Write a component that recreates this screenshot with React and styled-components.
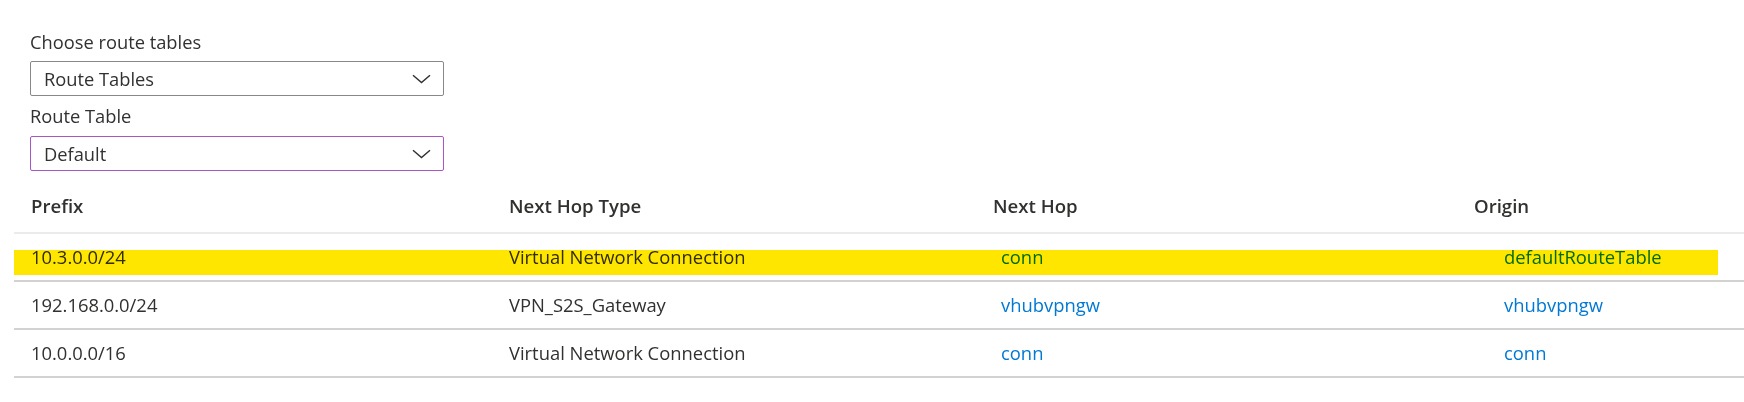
import styled, { createGlobalStyle } from 'styled-components';

const GlobalStyle = createGlobalStyle`
  body {
    margin: 0;
    background: #fff;
    font-family: "Open Sans", "Noto Sans", sans-serif;
    color: #323130;
  }
`;

const Page = styled.div`
  width: 1744px;
  height: 402px;
  overflow: hidden;
  padding-top: 26px;
  box-sizing: border-box;
`;

const Filters = styled.div`
  display: flex;
  flex-direction: column;
  padding-left: 30px;
  width: 414px;
`;

const Label = styled.label`
  display: block;
  box-sizing: border-box;
  font-size: 18.3px;
  line-height: 24px;
  padding-top: 4px;
  height: ${p => p.$h || 35}px;
`;

const Select = styled.div`
  display: flex;
  align-items: center;
  justify-content: space-between;
  height: 35px;
  box-sizing: border-box;
  border: 1.5px solid ${p => (p.$focused ? '#a855c6' : '#8a8886')};
  border-radius: 2px;
  padding: 0 12px 0 13px;
  font-size: 18.3px;
  margin-bottom: 4px;
`;

const Chevron = () => (
  <svg width="19" height="10" viewBox="0 0 19 10" fill="none">
    <path d="M1 1.2 L9.5 8.6 L18 1.2" stroke="#323130" strokeWidth="1.4" />
  </svg>
);

const Table = styled.div`
  margin-left: 14px;
  margin-top: 11px;
`;

const Row = styled.div`
  position: relative;
  display: grid;
  grid-template-columns: 478px 484px 481px 1fr;
  height: 48px;
  box-sizing: border-box;
  border-bottom: 2px solid ${p => (p.$head ? '#edebe9' : '#d4d2d0')};

  ${p =>
    p.$highlight &&
    `
    &::after {
      content: "";
      position: absolute;
      left: 0;
      right: 26px;
      top: 16px;
      height: 25px;
      background: #ffe600;
      mix-blend-mode: multiply;
    }
  `}
`;

const Cell = styled.div`
  padding-left: ${p => p.$indent || 17}px;
  padding-top: ${p => (p.$head ? 8 : 11)}px;
  font-size: ${p => (p.$head ? 18.6 : 18.4)}px;
  line-height: 24px;
  font-weight: ${p => (p.$head ? 600 : 400)};
  color: ${p => (p.$link ? '#0078d4' : '#323130')};
  white-space: nowrap;
`;

const routes = [
  { prefix: '10.3.0.0/24', type: 'Virtual Network Connection', hop: 'conn', origin: 'defaultRouteTable', highlight: true },
  { prefix: '192.168.0.0/24', type: 'VPN_S2S_Gateway', hop: 'vhubvpngw', origin: 'vhubvpngw' },
  { prefix: '10.0.0.0/16', type: 'Virtual Network Connection', hop: 'conn', origin: 'conn' },
];

export default function App() {
  return (
    <>
      <GlobalStyle />
      <Page>
        <Filters>
          <Label>Choose route tables</Label>
          <Select>
            Route Tables
            <Chevron />
          </Select>
          <Label $h={36}>Route Table</Label>
          <Select $focused>
            Default
            <Chevron />
          </Select>
        </Filters>
        <Table>
          <Row $head>
            <Cell $head>Prefix</Cell>
            <Cell $head>Next Hop Type</Cell>
            <Cell $head>Next Hop</Cell>
            <Cell $head>Origin</Cell>
          </Row>
          {routes.map(r => (
            <Row key={r.prefix} $highlight={r.highlight}>
              <Cell>{r.prefix}</Cell>
              <Cell>{r.type}</Cell>
              <Cell $link $indent={25}>{r.hop}</Cell>
              <Cell $link $indent={47}>{r.origin}</Cell>
            </Row>
          ))}
        </Table>
      </Page>
    </>
  );
}
